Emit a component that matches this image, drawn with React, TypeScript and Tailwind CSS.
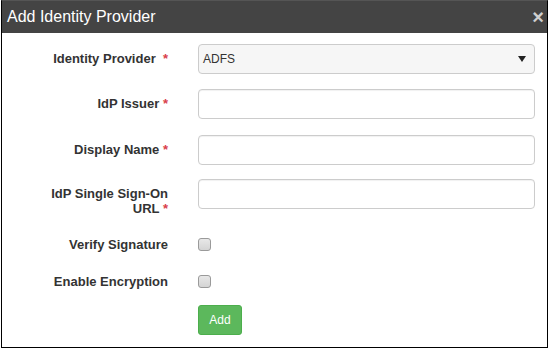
import React from "react";

/**
 * Add Identity Provider dialog
 */

function Label({ text, marks = " " }: { text: string; marks?: string }) {
  return (
    <div className="w-[120px] ml-[46px] text-right text-[13px] font-bold text-[#333] leading-[15px] pt-[7px]">
      {text}
      {marks}
      <span className="text-[#d9404a]">*</span>
    </div>
  );
}

function TextInput() {
  return (
    <div className="ml-[30px] w-[337px] h-[30px] rounded-[4px] border border-[#cccccc] bg-white shadow-[inset_0_1px_1px_rgba(0,0,0,0.06)]" />
  );
}

function Checkbox() {
  return (
    <div className="ml-[30px] w-[13px] h-[13px] rounded-[3px] border border-[#9a9a9a] bg-gradient-to-b from-[#e8e8e8] to-[#d4d4d4]" />
  );
}

export default function App() {
  return (
    <div className="w-[550px] h-[350px] bg-white font-['Liberation_Sans',Arial,sans-serif]">
      <div className="ml-[1px] w-[547px] h-[348px] border border-black border-t-[#555555] flex flex-col">
        {/* Header */}
        <div className="h-[32px] bg-[#444444] flex items-center justify-between pl-[5px] pr-[3px]">
          <span className="text-white text-[16px] leading-none">Add Identity Provider</span>
          <span className="text-[#cfcfcf] text-[20px] font-bold leading-none">×</span>
        </div>

        {/* Body */}
        <div className="flex flex-col pt-[11px]">
          <div className="flex items-start h-[30px]">
            <Label text="Identity Provider" marks={"\u00a0 "} />
            <div className="ml-[30px] w-[337px] h-[30px] rounded-[4px] border border-[#cccccc] bg-[#f6f6f6] flex items-center justify-between pl-[4px] pr-[8px]">
              <span className="text-[12px] text-[#333]">ADFS</span>
              <svg width="8" height="6" viewBox="0 0 8 6">
                <polygon points="0,0 8,0 4,6" fill="#222" />
              </svg>
            </div>
          </div>

          <div className="flex items-start h-[30px] mt-[15px]">
            <Label text="IdP Issuer" />
            <TextInput />
          </div>

          <div className="flex items-start h-[30px] mt-[16px]">
            <Label text="Display Name" />
            <TextInput />
          </div>

          <div className="flex items-start h-[30px] mt-[14px]">
            <Label text="IdP Single Sign-On URL" />
            <TextInput />
          </div>

          <div className="flex items-center h-[20px] mt-[25px]">
            <div className="w-[120px] ml-[46px] text-right text-[13px] font-bold text-[#333] leading-[15px]">Verify Signature</div>
            <Checkbox />
          </div>

          <div className="flex items-center h-[20px] mt-[17px]">
            <div className="w-[120px] ml-[46px] text-right text-[13px] font-bold text-[#333] leading-[15px]">Enable Encryption</div>
            <Checkbox />
          </div>

          <div className="mt-[14px] ml-[196px]">
            <button className="w-[44px] h-[30px] rounded-[3px] bg-[#5cb85c] border border-[#4cae4c] text-white text-[12px]">
              Add
            </button>
          </div>
        </div>
      </div>
    </div>
  );
}
